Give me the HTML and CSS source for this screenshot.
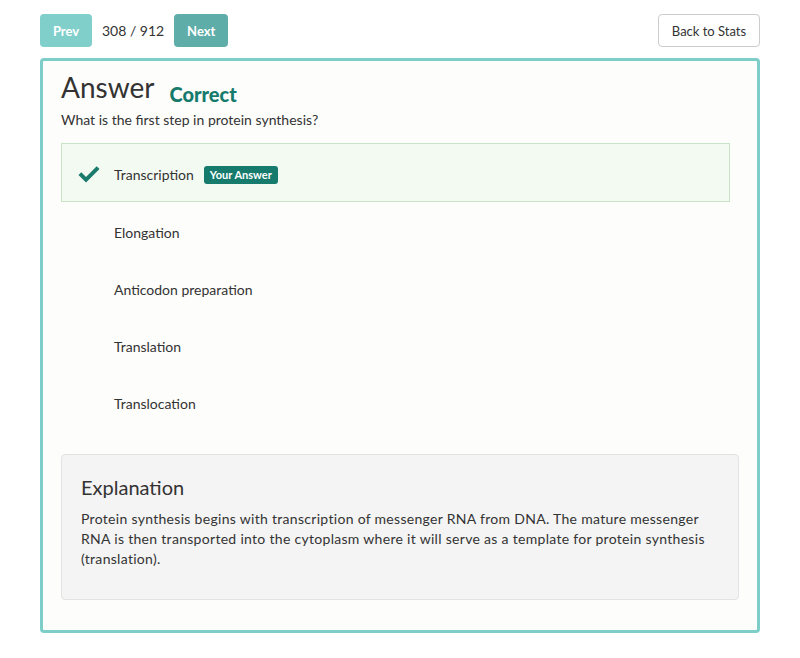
FILE: index.html
```html
<!DOCTYPE html>
<html>
<head>
<meta charset="utf-8">
<link rel="stylesheet" href="styles.css">
</head>
<body>
<div class="page">
  <div class="topbar">
    <div class="nav">
      <button class="btn btn-prev">Prev</button>
      <span class="count">308 / 912</span>
      <button class="btn btn-next">Next</button>
    </div>
    <button class="btn btn-back">Back to Stats</button>
  </div>
  <div class="card">
    <div class="title">
      <h1>Answer</h1><span class="status">Correct</span>
    </div>
    <p class="question">What is the first step in protein synthesis?</p>
    <ul class="options">
      <li class="option selected">
        <span class="icon"><svg width="22" height="17" viewBox="0 0 22 17"><path d="M0.5 9 L3.3 6.2 L8 10.9 L18.7 0.2 L21.5 3 L8 16.5 Z" fill="#1a7a6c"/></svg></span>
        <span class="label">Transcription</span>
        <span class="badge">Your Answer</span>
      </li>
      <li class="option"><span class="icon"></span><span class="label">Elongation</span></li>
      <li class="option"><span class="icon"></span><span class="label">Anticodon preparation</span></li>
      <li class="option"><span class="icon"></span><span class="label">Translation</span></li>
      <li class="option"><span class="icon"></span><span class="label">Translocation</span></li>
    </ul>
    <div class="explanation">
      <h2>Explanation</h2>
      <p>Protein synthesis begins with transcription of messenger RNA from DNA. The mature messenger RNA is then transported into the cytoplasm where it will serve as a template for protein synthesis (translation).</p>
    </div>
  </div>
</div>
</body>
</html>
```
FILE: styles.css
```css
* { box-sizing: border-box; }
html, body { margin: 0; padding: 0; background: #ffffff; }
body {
  font-family: Lato, "Open Sans", "Liberation Sans", sans-serif;
  color: #333333;
  font-size: 14px;
}
.page { padding: 14px 40px 0 40px; }
.topbar {
  display: flex;
  justify-content: space-between;
  align-items: center;
  height: 33px;
}
.nav { display: flex; align-items: center; }
.btn {
  font-family: inherit;
  height: 33px;
  border-radius: 4px;
  font-size: 14px;
  padding: 0 12px;
  cursor: pointer;
}
.btn-prev, .btn-next {
  border: 1px solid transparent;
  color: #ffffff;
  font-weight: bold;
  font-size: 13px;
}
.btn-prev { background: #80cfcb; width: 52px; padding: 0; }
.btn-next { background: #5eada9; width: 54px; padding: 0; }
.count { margin: 0 10px; font-size: 14px; color: #333; }
.btn-back {
  background: #ffffff;
  border: 1px solid #cccccc;
  color: #333333;
  width: 102px;
  padding: 0;
  font-size: 13px;
}
.card {
  margin-top: 11px;
  border: 3px solid #7dcdc9;
  border-radius: 4px;
  background: #fdfdfb;
  padding: 6px 18px 30px 18px;
  height: 575px;
}
.title { line-height: 40px; height: 40px; }
h1 {
  display: inline;
  margin: 0;
  font-size: 28px;
  font-weight: normal;
  color: #333;
}
.status {
  margin-left: 15px;
  font-size: 20px;
  font-weight: 900;
  color: #167a6c;
  vertical-align: -4px;
}
.question { margin: 0; line-height: 20px; padding-top: 3px; }
.options {
  list-style: none;
  margin: 13px 9px 0 0;
  padding: 0;
}
.option {
  display: flex;
  align-items: center;
  height: 57px;
  border: 1px solid transparent;
  padding-left: 16px;
  padding-top: 4px;
}
.option.selected {
  height: 59px;
  background: #f3faf2;
  border-color: #c8e3c6;
}
.icon { width: 36px; display: flex; align-items: center; }
.label { font-size: 14px; color: #333; }
.badge {
  margin-left: 10px;
  background: #167a6c;
  color: #ffffff;
  font-size: 11px;
  font-weight: bold;
  padding: 2px 6px;
  border-radius: 3px;
  line-height: 14px;
}
.explanation {
  margin-top: 24px;
  background: #f4f4f4;
  border: 1px solid #e3e3e3;
  border-radius: 4px;
  padding: 18px 19px 20px 19px;
}
h2 {
  margin: 0 0 8px 0;
  font-size: 20px;
  font-weight: normal;
  line-height: 28px;
  color: #333;
}
.explanation p {
  margin: 0 0 10px 0;
  line-height: 20px;
  font-size: 14px;
  letter-spacing: 0.3px;
}
```
